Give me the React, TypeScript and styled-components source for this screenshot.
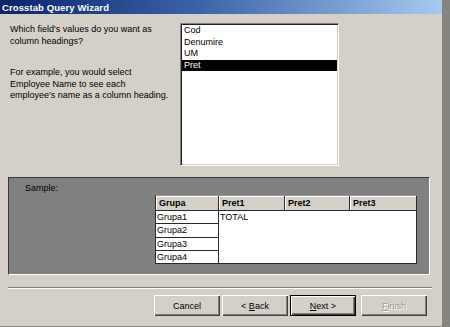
import React from "react";
import styled, { createGlobalStyle } from "styled-components";

const Global = createGlobalStyle`
  html, body { margin: 0; padding: 0; background: #d4d0c8; }
  body { font-family: "Liberation Sans", Arial, sans-serif; font-size: 9px; color: #000; }
`;

const Screen = styled.div`
  width: 450px;
  height: 327px;
  display: flex;
  overflow: hidden;
  background: #d4d0c8;
`;

const Dialog = styled.div`
  width: 442px;
  height: 326px;
  display: flex;
  flex-direction: column;
  background: #d4d0c8;
  border-bottom: 1px solid #8a8880;
`;

const Edge = styled.div`
  width: 8px;
  height: 327px;
  background: #86847f;
`;

const TitleBar = styled.div`
  height: 14px;
  flex: none;
  display: flex;
  align-items: center;
  padding-left: 2px;
  background: linear-gradient(90deg, #0a246a 0%, #3b63a8 45%, #a6caf0 100%);
  color: #fff;
  font-weight: bold;
  font-size: 9.5px;
  letter-spacing: 0.1px;
`;

const TopSection = styled.div`
  display: flex;
  padding: 9px 0 0 10px;
  margin-bottom: 11px;
`;

const Prompt = styled.div`
  width: 170px;
  padding-top: 1px;
  line-height: 11.5px;
  font-size: 9px;
`;

const Para = styled.p<{ $gap?: number }>`
  margin: 0 0 ${(p) => p.$gap ?? 0}px 0;
`;

const ListBox = styled.div`
  width: 159px;
  height: 143px;
  box-sizing: border-box;
  background: #fff;
  border-top: 1px solid #808080;
  border-left: 1px solid #808080;
  border-right: 1px solid #ffffff;
  border-bottom: 1px solid #ffffff;
  box-shadow: inset 1px 1px 0 #202020, inset -1px -1px 0 #d4d0c8;
  padding: 1px;
  display: flex;
  flex-direction: column;
`;

const ListItem = styled.div<{ $selected?: boolean }>`
  height: 11.5px;
  line-height: 11.5px;
  padding-left: 2px;
  font-size: 9px;
  background: ${(p) => (p.$selected ? "#000" : "transparent")};
  color: ${(p) => (p.$selected ? "#fff" : "#000")};
`;

const SamplePanel = styled.div`
  margin-left: 8px;
  width: 422px;
  height: 98px;
  box-sizing: border-box;
  background: #808080;
  border-top: 1px solid #3a3a3a;
  border-left: 1px solid #3a3a3a;
  border-right: 1px solid #ffffff;
  border-bottom: 1px solid #ffffff;
  padding: 4px 0 0 16px;
  display: flex;
  flex-direction: column;
`;

const SampleLabel = styled.div`
  height: 12px;
  line-height: 12px;
  font-size: 9px;
  color: #000;
`;

const SampleTable = styled.div`
  margin: 1px 0 0 130px;
  display: grid;
  grid-template-columns: 63px 66px 65px 67px;
  grid-template-rows: 15px 13px 14px 13px 13px;
  width: 262px;
  box-sizing: border-box;
  border-left: 1px solid #2a2a2a;
  border-top: 1px solid #9a9a9a;
  font-size: 9px;
`;

const HeadCell = styled.div`
  background: #d4d0c8;
  border-right: 1px solid #2a2a2a;
  border-bottom: 1px solid #2a2a2a;
  box-shadow: inset 1px 1px 0 #ffffff;
  font-weight: bold;
  padding-left: 3px;
  line-height: 14px;
`;

const RowCell = styled.div`
  background: #fff;
  border-right: 1px solid #2a2a2a;
  border-bottom: 1px solid #2a2a2a;
  padding-left: 1px;
  line-height: 12px;
`;

const DataArea = styled.div`
  grid-column: 2 / 5;
  grid-row: 2 / 6;
  background: #fff;
  border-right: 1px solid #2a2a2a;
  border-bottom: 1px solid #2a2a2a;
  padding-left: 1px;
  line-height: 12px;
`;

const Separator = styled.div`
  margin: 12px 0 0 8px;
  width: 424px;
  height: 1px;
  background: #808080;
  border-bottom: 1px solid #ffffff;
`;

const ButtonRow = styled.div`
  display: flex;
  padding: 6px 0 0 154px;
`;

const Button = styled.div<{ $default?: boolean; $disabled?: boolean; $gap?: number }>`
  width: 66px;
  height: 21px;
  box-sizing: border-box;
  margin-right: ${(p) => p.$gap ?? 0}px;
  background: #d4d0c8;
  display: flex;
  align-items: center;
  justify-content: center;
  font-size: 9px;
  color: ${(p) => (p.$disabled ? "#9a978f" : "#000")};
  text-shadow: ${(p) => (p.$disabled ? "1px 1px 0 #fff" : "none")};
  border: ${(p) => (p.$default ? "1px solid #000" : "none")};
  box-shadow: inset 1px 1px 0 #ffffff, inset -1px -1px 0 #404040,
    inset -2px -2px 0 #808080;
`;

export default function App() {
  return (
    <>
      <Global />
      <Screen>
        <Dialog>
          <TitleBar>Crosstab Query Wizard</TitleBar>
          <TopSection>
            <Prompt>
              <Para $gap={20}>
                Which field's values do you want as
                <br />
                column headings?
              </Para>
              <Para>
                For example, you would select
                <br />
                Employee Name to see each
                <br />
                employee's name as a column heading.
              </Para>
            </Prompt>
            <ListBox>
              <ListItem>Cod</ListItem>
              <ListItem>Denumire</ListItem>
              <ListItem>UM</ListItem>
              <ListItem $selected>Pret</ListItem>
            </ListBox>
          </TopSection>
          <SamplePanel>
            <SampleLabel>Sample:</SampleLabel>
            <SampleTable>
              <HeadCell>Grupa</HeadCell>
              <HeadCell>Pret1</HeadCell>
              <HeadCell>Pret2</HeadCell>
              <HeadCell>Pret3</HeadCell>
              <RowCell>Grupa1</RowCell>
              <DataArea>TOTAL</DataArea>
              <RowCell>Grupa2</RowCell>
              <RowCell>Grupa3</RowCell>
              <RowCell>Grupa4</RowCell>
            </SampleTable>
          </SamplePanel>
          <Separator />
          <ButtonRow>
            <Button $gap={2}>Cancel</Button>
            <Button $gap={2}>
              &lt;&nbsp;<u>B</u>ack
            </Button>
            <Button $default $gap={5}>
              <u>N</u>ext &gt;
            </Button>
            <Button $disabled>
              <u>F</u>inish
            </Button>
          </ButtonRow>
        </Dialog>
        <Edge />
      </Screen>
    </>
  );
}
